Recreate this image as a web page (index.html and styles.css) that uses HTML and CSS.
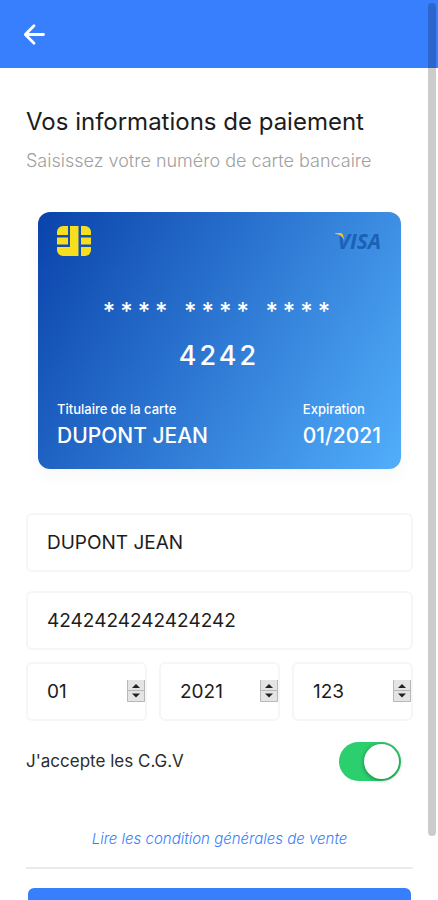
FILE: index.html
```html
<!DOCTYPE html>
<html lang="fr">
<head>
    <meta charset="utf-8">
    <meta name="viewport" content="width=device-width, initial-scale=1">
    <title>Paiement</title>
    <link rel="stylesheet" href="styles.css">
</head>
<body>
    <header class="topBar">
        <a class="backLink" href="#" aria-label="Retour">
            <svg width="24" height="24" viewBox="0 0 24 24" fill="none" stroke="#fff" stroke-width="2.8" stroke-linecap="round" stroke-linejoin="round">
                <path d="M21.500 12.500H4M12 3.800L3.300 12.500l8.700 8.700" />
            </svg>
        </a>
    </header>

    <main class="content">
        <h1 class="title">Vos informations de paiement</h1>
        <p class="subtitle">Saisissez votre numéro de carte bancaire</p>

        <section class="card">
            <div class="cardTop">
                <svg class="chip" width="34" height="30" viewBox="0 0 34 30" fill="#f7df1e">
                    <path d="M6 0h5v9H0V6a6 6 0 0 1 6-6z" />
                    <path d="M0 11.500h11v7H0z" />
                    <path d="M13 0h8.500v30H6a6 6 0 0 1-6-6v-3h13z" />
                    <path d="M24 0h4a6 6 0 0 1 6 6v3H24z" />
                    <path d="M24 11.500h10v7H24z" />
                    <path d="M24 21h10v3a6 6 0 0 1-6 6h-4z" />
                </svg>
                <span class="visa">
                    <svg class="visaWing" width="10" height="8" viewBox="0 0 10 8" fill="#f2c230">
                        <path d="M0 0h5.500q2 0 2.500 2l1.200 5Q6.500 2 0 .6z" />
                    </svg>
                    VISA
                </span>
            </div>
            <div class="cardMask">**** **** ****</div>
            <div class="cardDigits">4242</div>
            <div class="cardBottom">
                <div>
                    <div class="cardLabel">Titulaire de la carte</div>
                    <div class="cardValue">DUPONT JEAN</div>
                </div>
                <div>
                    <div class="cardLabel">Expiration</div>
                    <div class="cardValue">01/2021</div>
                </div>
            </div>
        </section>

        <form class="payForm">
            <input class="field" type="text" value="DUPONT JEAN" aria-label="Titulaire de la carte">
            <input class="field" type="text" value="4242424242424242" inputmode="numeric" aria-label="Numéro de carte">
            <div class="fieldRow">
                <input class="field number" type="number" value="01" aria-label="Mois">
                <input class="field number" type="number" value="2021" aria-label="Année">
                <input class="field number" type="number" value="123" aria-label="CVC">
            </div>
            <div class="accept">
                <label for="cgv">J'accepte les C.G.V</label>
                <input id="cgv" class="toggle" type="checkbox" role="switch" checked>
            </div>
            <a class="terms" href="#">Lire les condition générales de vente</a>
            <hr class="line">
            <button class="submitButton" type="submit" aria-label="Valider"></button>
        </form>
    </main>
    <div class="scrollThumb"></div>
</body>
</html>
```

FILE: styles.css
```css
*
{
    box-sizing: border-box;
}
body
{
    margin: 0;
    height: 100vh;
    overflow: hidden;
    background: #fff;
    color: #1c1c1c;
    font-family: Inter, "Liberation Sans", sans-serif;
}
.topBar
{
    display: flex;
    align-items: center;
    height: 68px;
    padding: 0 22px;
    background: #387ffe;
}
.backLink
{
    display: flex;
}
.content
{
    padding: 36px 25px 24px 26px;
}
.title
{
    margin: 0;
    font-size: 24px;
    line-height: 36px;
    font-weight: 400;
}
.subtitle
{
    margin: 8px 0 0;
    font-size: 18px;
    line-height: 26px;
    font-weight: 300;
    color: #a0a0a0;
}

/* bank card */
.card
{
    margin: 38px 12px 0;
    padding: 14px 20px 19px 19px;
    border-radius: 12px;
    background: linear-gradient(120deg, #0a43ab, #52aefb);
    box-shadow: 0 8px 16px rgba(0, 0, 0, 0.03);
    color: #fff;
}
.cardTop
{
    display: flex;
    justify-content: space-between;
    align-items: center;
}
.visa
{
    position: relative;
    font-family: "Open Sans", sans-serif;
    font-size: 21px;
    line-height: 30px;
    font-weight: 700;
    font-style: italic;
    color: #1a62b5;
}
.visaWing
{
    position: absolute;
    left: -3px;
    top: 7px;
}
.cardMask
{
    margin-top: 40px;
    font-size: 24px;
    line-height: 32px;
    font-weight: 500;
    letter-spacing: 5px;
    text-align: center;
}
.cardDigits
{
    margin-top: 12px;
    font-size: 27px;
    line-height: 32px;
    font-weight: 500;
    letter-spacing: 3px;
    text-align: center;
}
.cardBottom
{
    display: flex;
    justify-content: space-between;
    margin-top: 28px;
}
.cardLabel
{
    font-size: 13px;
    line-height: 18px;
    font-weight: 500;
}
.cardValue
{
    margin-top: 4px;
    font-size: 21px;
    line-height: 28px;
    font-weight: 500;
}

/* form */
.payForm
{
    display: flex;
    flex-direction: column;
    margin-top: 44px;
}
.field
{
    width: 100%;
    min-width: 0;
    height: 59px;
    margin-bottom: 19px;
    padding: 0 19px;
    border: 2px solid #f6f6f6;
    border-radius: 6px;
    background: #fff;
    color: #1c1c1c;
    font-family: inherit;
    font-size: 19px;
}
.fieldRow
{
    display: flex;
    gap: 12px;
    margin-top: -7px;
}
.number
{
    padding-right: 0;
}
.number::-webkit-inner-spin-button
{
    -webkit-appearance: none;
    opacity: 1;
    width: 18px;
    height: 22px;
    background: #e4e4e4 url("data:image/svg+xml,%3Csvg xmlns='http://www.w3.org/2000/svg' width='18' height='22'%3E%3Cpath d='M.5 0v21.500h17V0M1 10.500h16' fill='none' stroke='%23b8b8b8'/%3E%3Cpath d='M5 8l4-4 4 4zM5 13.500l4 4 4-4z' fill='%23222'/%3E%3C/svg%3E") no-repeat;
}
.accept
{
    display: flex;
    justify-content: space-between;
    align-items: center;
    padding-right: 12px;
    font-size: 17px;
    color: #2c2c2c;
}
.toggle
{
    -webkit-appearance: none;
    appearance: none;
    display: flex;
    justify-content: flex-end;
    width: 62px;
    height: 39px;
    margin: 2px 0 0;
    padding: 2px;
    border-radius: 20px;
    background: #c8c8c8;
}
.toggle:checked
{
    background: #2bcf6e;
}
.toggle::before
{
    content: "";
    width: 35px;
    height: 35px;
    border-radius: 50%;
    background: #fff;
    box-shadow: 0 1px 4px rgba(0, 0, 0, 0.4);
}
.toggle:not(:checked)
{
    justify-content: flex-start;
}
.terms
{
    margin-top: 46px;
    font-size: 15px;
    line-height: 24px;
    font-weight: 300;
    font-style: italic;
    text-align: center;
    text-decoration: none;
    color: #387ffe;
}
.line
{
    width: 100%;
    margin: 16px 0 19px;
    border: 0;
    border-top: 2px solid #ebebeb;
}
.submitButton
{
    height: 56px;
    margin: 0 2px;
    border: 0;
    border-radius: 6px;
    background: #387ffe;
}
.scrollThumb
{
    position: fixed;
    top: 3px;
    right: 2px;
    width: 8px;
    height: 92.5vh;
    border-radius: 4px;
    background: rgba(0, 0, 0, 0.2);
}
```
